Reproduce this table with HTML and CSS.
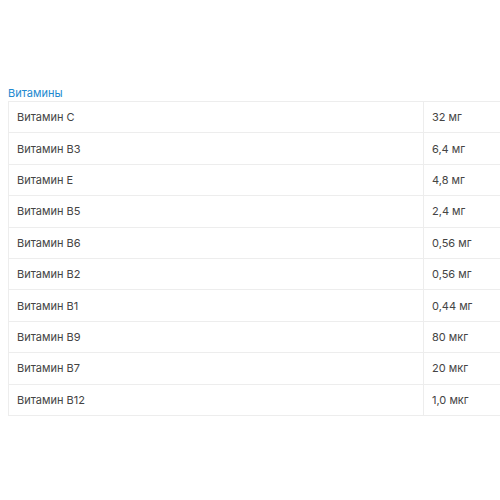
FILE: index.html
```html
<!DOCTYPE html>
<html lang="ru">
<head>
<meta charset="utf-8">
<link rel="stylesheet" href="styles.css">
</head>
<body>
<div class="wrap">
  <div class="title">Витамины</div>
  <table class="tbl">
    <tr><td class="name">Витамин C</td><td class="val">32 мг</td></tr>
    <tr><td class="name">Витамин B3</td><td class="val">6,4 мг</td></tr>
    <tr><td class="name">Витамин E</td><td class="val">4,8 мг</td></tr>
    <tr><td class="name">Витамин B5</td><td class="val">2,4 мг</td></tr>
    <tr><td class="name">Витамин B6</td><td class="val">0,56 мг</td></tr>
    <tr><td class="name">Витамин B2</td><td class="val">0,56 мг</td></tr>
    <tr><td class="name">Витамин B1</td><td class="val">0,44 мг</td></tr>
    <tr><td class="name">Витамин B9</td><td class="val">80 мкг</td></tr>
    <tr><td class="name">Витамин B7</td><td class="val">20 мкг</td></tr>
    <tr><td class="name">Витамин B12</td><td class="val">1,0 мкг</td></tr>
  </table>
</div>
</body>
</html>
```
FILE: styles.css
```css
html, body {
  margin: 0;
  padding: 0;
  background: #fff;
  overflow: hidden;
}
body {
  font-family: "Inter", "Noto Sans", sans-serif;
  font-size: 11px;
  color: #444;
}
.wrap {
  padding: 86px 0 0 8px;
  width: 600px;
}
.title {
  color: #2289cf;
  font-size: 11px;
  line-height: 15px;
}
.tbl {
  border-collapse: collapse;
  width: 592px;
}
.tbl tr {
  height: 31.4px;
}
.tbl td {
  border: 1px solid #ededed;
  padding: 0 8px;
  line-height: 14px;
  vertical-align: middle;
}
.tbl td.name {
  width: 398px;
}
```
